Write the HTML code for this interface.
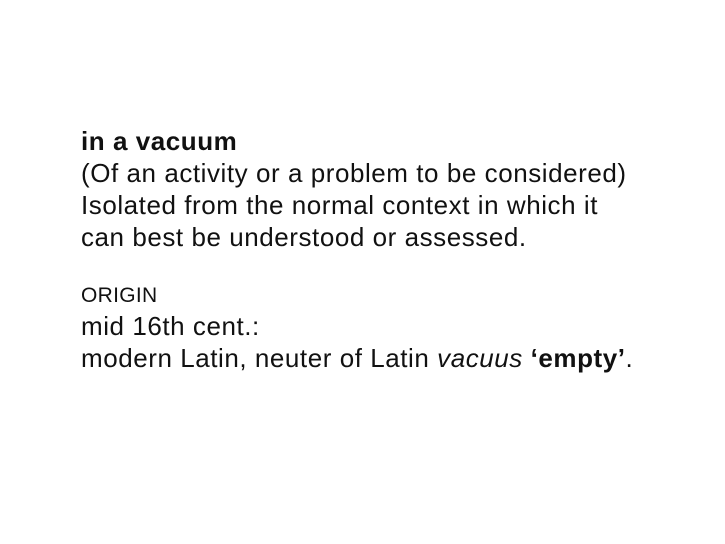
<!DOCTYPE html>
<html><head><style>
body{margin:0;width:725px;height:544px;background:#fff;font-family:"Liberation Sans",sans-serif;color:#111;position:relative}
.t{position:absolute;left:81px;font-size:26px;line-height:32px;white-space:nowrap;letter-spacing:0.55px}
</style></head><body>
<div class="t" style="top:125px"><b>in a vacuum</b><br>(Of an activity or a problem to be considered)<br>Isolated from the normal context in which it<br>can best be understood or assessed.</div>
<div class="t" style="top:283px;font-size:21px;line-height:26px;letter-spacing:0.3px">ORIGIN</div>
<div class="t" style="top:310px">mid 16th cent.:<br>modern Latin, neuter of Latin <i>vacuus</i> <b>‘empty’</b>.</div>
</body></html>
